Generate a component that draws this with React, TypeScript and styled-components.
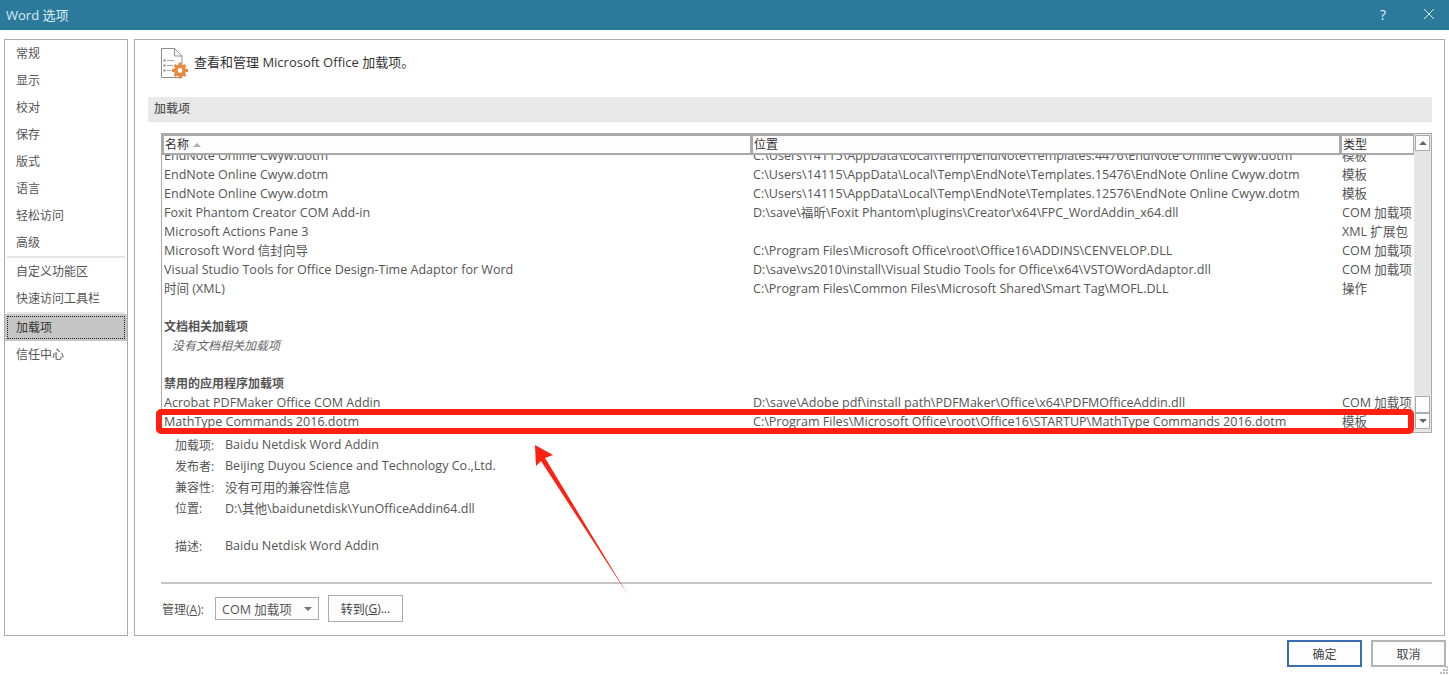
import * as React from 'react';
import styled, { createGlobalStyle } from 'styled-components';

const GlobalStyle = createGlobalStyle`
  html, body {
    margin: 0;
    padding: 0;
    background: #fff;
  }
  body {
    font-family: "Open Sans", "Noto Sans CJK SC", sans-serif;
    font-size: 12.55px;
    color: #444;
  }
  * {
    box-sizing: border-box;
  }
`;

const Dialog = styled.div`
  position: relative;
  width: 1449px;
  height: 675px;
  overflow: hidden;
  background: #fff;
`;

const TitleBar = styled.div`
  height: 30px;
  background: #2b7a9b;
  color: #dcecf3;
  display: flex;
  align-items: center;
  padding: 0 0 2px 6px;
  font-size: 13px;
`;

const TitleText = styled.div`
  flex: 1;
`;

const HelpButton = styled.div`
  width: 14px;
  margin-right: 29px;
  font-size: 14px;
  color: #e4f0f5;
`;

const CloseButton = styled.svg`
  width: 12px;
  height: 12px;
  margin-right: 14px;
`;

const Body = styled.div`
  display: flex;
  gap: 6px;
  height: 597px;
  margin: 9px 4px 0 4px;
`;

const Sidebar = styled.div`
  width: 124px;
  flex: none;
  border: 1px solid #ababab;
`;

const NavItem = styled.div<{ $active?: boolean }>`
  height: 27px;
  line-height: 27px;
  padding-left: 11px;
  color: #555;
  font-size: 12px;
  ${({ $active }) =>
    $active &&
    `
    background: #c6c6c6;
    color: #333;
    outline: 1px dotted #222;
    outline-offset: -3px;
  `}
`;

const NavSeparator = styled.div`
  height: 2px;
  margin: 0 2px;
  background: #e6e6e6;
`;

const Main = styled.div`
  flex: 1;
  min-width: 0;
  border: 1px solid #ababab;
  padding: 7px 12px 0 13px;
  display: flex;
  flex-direction: column;
`;

const Heading = styled.div`
  display: flex;
  align-items: center;
  gap: 5px;
  height: 30px;
  margin: 0 0 0 13px;
  padding-bottom: 2px;
  color: #333;
  font-size: 13px;
`;

const HeadingIcon = styled.svg`
  width: 28px;
  height: 32px;
  flex: none;
  align-self: flex-start;
`;

const SectionBar = styled.div`
  height: 25px;
  margin-top: 20px;
  padding-left: 6px;
  background: #e9e9e9;
  border-bottom: 1px solid #e2e2e2;
  font-size: 12px;
  font-weight: 500;
  line-height: 24px;
  color: #555;
`;

const ListBox = styled.div`
  height: 300px;
  margin: 11px 0 0 13px;
  border: 1px solid #ababab;
  display: flex;
`;

const ListContent = styled.div`
  flex: 1;
  min-width: 0;
  display: flex;
  flex-direction: column;
`;

const HeaderRow = styled.div`
  height: 21px;
  flex: none;
  display: grid;
  grid-template-columns: 586px 586px 71px;
  background: #a9a9a9;
  gap: 3px;
  padding: 2px;
  position: relative;
  z-index: 1;
`;

const HeaderCell = styled.div`
  background: #fdfdfd;
  color: #333;
  font-size: 12px;
  line-height: 17px;
  padding-left: 1px;
  display: flex;
  align-items: center;
  gap: 4px;
`;

const SortMark = styled.span`
  width: 0;
  height: 0;
  border-left: 4px solid transparent;
  border-right: 4px solid transparent;
  border-bottom: 4px solid #b0aea4;
`;

const Rows = styled.div`
  flex: 1;
  overflow: hidden;
`;

const RowsInner = styled.div`
  margin-top: -9px;
`;

const Row = styled.div`
  height: 19px;
  line-height: 19px;
  display: grid;
  grid-template-columns: 589px 589px 72px;
  padding-left: 2px;
  white-space: nowrap;
  color: #555;
`;

const Cell = styled.div`
  overflow: hidden;
`;

const GroupTitle = styled.div`
  height: 19px;
  line-height: 19px;
  padding-left: 2px;
  font-weight: 700;
  font-size: 12px;
  color: #555;
`;

const EmptyNote = styled.div`
  height: 19px;
  line-height: 19px;
  padding-left: 10px;
  font-style: italic;
  font-size: 12px;
  color: #666;
`;

const Spacer = styled.div`
  height: 19px;
`;

const Scrollbar = styled.div`
  width: 17px;
  flex: none;
  background: #e6e6e6;
  display: flex;
  flex-direction: column;
  padding: 1px 1px 3px 1px;
`;

const ScrollButton = styled.div<{ $down?: boolean }>`
  height: 16px;
  background: #fdfdfd;
  border: 1px solid #ababab;
  display: flex;
  align-items: center;
  justify-content: center;
  &::after {
    content: '';
    border-left: 4px solid transparent;
    border-right: 4px solid transparent;
    ${({ $down }) => ($down ? 'border-top: 4px solid #666;' : 'border-bottom: 4px solid #666;')}
  }
`;

const ScrollTrack = styled.div`
  flex: 1;
  display: flex;
  flex-direction: column;
  justify-content: flex-end;
`;

const ScrollThumb = styled.div`
  height: 17px;
  background: #fff;
  border: 1px solid #ababab;
`;

const Details = styled.div`
  margin: 1px 0 0 27px;
  display: grid;
  grid-template-columns: 50px 1fr;
  grid-template-rows: 21px 21px 21px 21px 17px 21px;
  align-items: center;
  color: #555;
`;

const DetailLabel = styled.div`
  font-size: 12px;
`;

const DetailValue = styled.div``;

const Divider = styled.div`
  height: 2px;
  margin: 26px 0 0 13px;
  background: #c6c6c6;
`;

const ManageRow = styled.div`
  display: flex;
  align-items: center;
  margin: 11px 0 0 14px;
  height: 27px;
  color: #555;
`;

const ManageLabel = styled.div`
  width: 53px;
  font-size: 12px;
`;

const SelectBox = styled.div`
  width: 104px;
  height: 23px;
  border: 1px solid #ababab;
  display: flex;
  align-items: center;
  justify-content: space-between;
  padding: 0 6px;
  background: #fdfdfd;
  &::after {
    content: '';
    border-left: 4px solid transparent;
    border-right: 4px solid transparent;
    border-top: 4px solid #777;
  }
`;

const PushButton = styled.div<{ $primary?: boolean }>`
  width: 75px;
  height: 27px;
  display: flex;
  align-items: center;
  justify-content: center;
  background: #fdfdfd;
  color: #444;
  font-size: 12px;
  border: ${({ $primary }) => ($primary ? '2px solid #3b6db4' : '2px solid #b4b4b4')};
`;

const GoButton = styled(PushButton)`
  margin-left: 9px;
  border-width: 1px;
  border-color: #ababab;
`;

const Footer = styled.div`
  display: flex;
  justify-content: flex-end;
  gap: 9px;
  margin: 4px 3px 0 0;
`;

const Grip = styled.svg`
  position: absolute;
  right: 0;
  bottom: 0;
  width: 9px;
  height: 9px;
`;

const Highlight = styled.div`
  position: absolute;
  left: 156px;
  top: 409px;
  width: 1258px;
  height: 25px;
  border: 6px solid #ff2011;
  border-radius: 5px;
`;

const Arrow = styled.svg`
  position: absolute;
  left: 530px;
  top: 440px;
  width: 100px;
  height: 160px;
`;

const navTop = ['常规', '显示', '校对', '保存', '版式', '语言', '轻松访问', '高级'];
const navMiddle = ['自定义功能区', '快速访问工具栏'];

const addins = [
  ['EndNote Online Cwyw.dotm', 'C:\\Users\\14115\\AppData\\Local\\Temp\\EndNote\\Templates.4476\\EndNote Online Cwyw.dotm', '模板'],
  ['EndNote Online Cwyw.dotm', 'C:\\Users\\14115\\AppData\\Local\\Temp\\EndNote\\Templates.15476\\EndNote Online Cwyw.dotm', '模板'],
  ['EndNote Online Cwyw.dotm', 'C:\\Users\\14115\\AppData\\Local\\Temp\\EndNote\\Templates.12576\\EndNote Online Cwyw.dotm', '模板'],
  ['Foxit Phantom Creator COM Add-in', 'D:\\save\\福昕\\Foxit Phantom\\plugins\\Creator\\x64\\FPC_WordAddin_x64.dll', 'COM 加载项'],
  ['Microsoft Actions Pane 3', '', 'XML 扩展包'],
  ['Microsoft Word 信封向导', 'C:\\Program Files\\Microsoft Office\\root\\Office16\\ADDINS\\CENVELOP.DLL', 'COM 加载项'],
  ['Visual Studio Tools for Office Design-Time Adaptor for Word', 'D:\\save\\vs2010\\install\\Visual Studio Tools for Office\\x64\\VSTOWordAdaptor.dll', 'COM 加载项'],
  ['时间 (XML)', 'C:\\Program Files\\Common Files\\Microsoft Shared\\Smart Tag\\MOFL.DLL', '操作'],
];

const disabled = [
  ['Acrobat PDFMaker Office COM Addin', 'D:\\save\\Adobe pdf\\install path\\PDFMaker\\Office\\x64\\PDFMOfficeAddin.dll', 'COM 加载项'],
  ['MathType Commands 2016.dotm', 'C:\\Program Files\\Microsoft Office\\root\\Office16\\STARTUP\\MathType Commands 2016.dotm', '模板'],
];

const details = [
  ['加载项:', 'Baidu Netdisk Word Addin'],
  ['发布者:', 'Beijing Duyou Science and Technology Co.,Ltd.'],
  ['兼容性:', '没有可用的兼容性信息'],
  ['位置:', 'D:\\其他\\baidunetdisk\\YunOfficeAddin64.dll'],
  ['', ''],
  ['描述:', 'Baidu Netdisk Word Addin'],
];

const AddinIcon = () => (
  <HeadingIcon viewBox="0 0 28 32">
    <path d="M.5 1.5h13l7.5 7.5v21.5H.5z" fill="#fff" stroke="#8f8f8f" />
    <path d="M13.5 1.5V9H21" fill="none" stroke="#8f8f8f" />
    <path d="M6 13.5h7M6 18.5h6M6 23.5h4" stroke="#a8a8a8" />
    <circle cx="3.5" cy="13.5" r="1.2" fill="#969696" />
    <circle cx="3.5" cy="18.5" r="1.2" fill="#969696" />
    <circle cx="3.5" cy="23.5" r="1.2" fill="#969696" />
    <circle cx="19" cy="23.5" r="4.2" fill="#fff" stroke="#e8893f" strokeWidth="3.6" />
    <path d="M19 15.5v3M19 28.5v3M11 23.5h3M24 23.5h3M13.5 18l2 2M22.5 27l2 2M24.5 18l-2 2M15.5 27l-2 2" stroke="#e8893f" strokeWidth="2.8" />
  </HeadingIcon>
);

const AddinRow = ({ data }: { data: string[] }) => (
  <Row>
    <Cell>{data[0]}</Cell>
    <Cell>{data[1]}</Cell>
    <Cell>{data[2]}</Cell>
  </Row>
);

export default function App() {
  return (
    <Dialog>
      <GlobalStyle />
      <TitleBar>
        <TitleText>Word 选项</TitleText>
        <HelpButton>?</HelpButton>
        <CloseButton viewBox="0 0 12 12">
          <path d="M1 1l10 10M11 1L1 11" stroke="#e4f0f5" strokeWidth="1" fill="none" />
        </CloseButton>
      </TitleBar>
      <Body>
        <Sidebar>
          {navTop.map((item) => (
            <NavItem key={item}>{item}</NavItem>
          ))}
          <NavSeparator />
          {navMiddle.map((item) => (
            <NavItem key={item}>{item}</NavItem>
          ))}
          <NavSeparator />
          <NavItem $active>加载项</NavItem>
          <NavItem>信任中心</NavItem>
        </Sidebar>
        <Main>
          <Heading>
            <AddinIcon />
            查看和管理 Microsoft Office 加载项。
          </Heading>
          <SectionBar>加载项</SectionBar>
          <ListBox>
            <ListContent>
              <HeaderRow>
                <HeaderCell>
                  名称
                  <SortMark />
                </HeaderCell>
                <HeaderCell>位置</HeaderCell>
                <HeaderCell>类型</HeaderCell>
              </HeaderRow>
              <Rows>
                <RowsInner>
                  {addins.map((a, i) => (
                    <AddinRow key={i} data={a} />
                  ))}
                  <Spacer />
                  <GroupTitle>文档相关加载项</GroupTitle>
                  <EmptyNote>没有文档相关加载项</EmptyNote>
                  <Spacer />
                  <GroupTitle>禁用的应用程序加载项</GroupTitle>
                  {disabled.map((a, i) => (
                    <AddinRow key={i} data={a} />
                  ))}
                </RowsInner>
              </Rows>
            </ListContent>
            <Scrollbar>
              <ScrollButton />
              <ScrollTrack>
                <ScrollThumb />
              </ScrollTrack>
              <ScrollButton $down />
            </Scrollbar>
          </ListBox>
          <Details>
            {details.map(([label, value], i) => (
              <React.Fragment key={i}>
                <DetailLabel>{label}</DetailLabel>
                <DetailValue>{value}</DetailValue>
              </React.Fragment>
            ))}
          </Details>
          <Divider />
          <ManageRow>
            <ManageLabel>
              管理(<u>A</u>):
            </ManageLabel>
            <SelectBox>COM 加载项</SelectBox>
            <GoButton>
              转到(<u>G</u>)...
            </GoButton>
          </ManageRow>
        </Main>
      </Body>
      <Footer>
        <PushButton $primary>确定</PushButton>
        <PushButton>取消</PushButton>
      </Footer>
      <Grip viewBox="0 0 9 9">
        <g fill="#bdbdbd">
          <rect x="6" y="0" width="2" height="2" />
          <rect x="3" y="3" width="2" height="2" />
          <rect x="6" y="3" width="2" height="2" />
          <rect x="0" y="6" width="2" height="2" />
          <rect x="3" y="6" width="2" height="2" />
          <rect x="6" y="6" width="2" height="2" />
        </g>
      </Grip>
      <Highlight />
      <Arrow viewBox="0 0 100 160">
        <path d="M5 5L23 15L15 18L98 155L11 21L6 26Z" fill="#ff2011" />
      </Arrow>
    </Dialog>
  );
}
